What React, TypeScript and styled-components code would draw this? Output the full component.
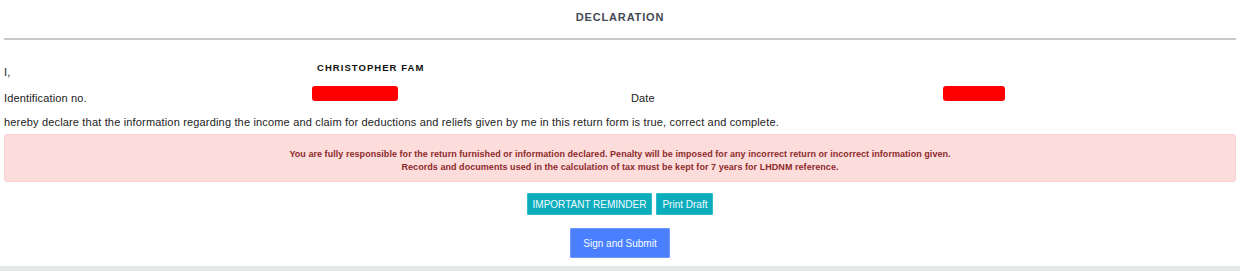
import React from 'react';
import styled, { createGlobalStyle } from 'styled-components';

const GlobalStyle = createGlobalStyle`
  html, body {
    margin: 0;
    padding: 0;
    background: #ffffff;
  }
  body {
    font-family: "Liberation Sans", Arial, sans-serif;
    color: #222;
  }
`;

const Page = styled.div`
  width: 1240px;
  height: 271px;
  display: flex;
  flex-direction: column;
  background: #fff;
  overflow: hidden;
`;

const Section = styled.div`
  flex: 1;
  padding: 0 4px;
  display: flex;
  flex-direction: column;
`;

const Title = styled.h3`
  margin: 0;
  padding-top: 11px;
  height: 38px;
  box-sizing: border-box;
  line-height: 13px;
  text-align: center;
  font-size: 11px;
  font-weight: 700;
  letter-spacing: 0.85px;
  color: #3f4a54;
`;

const Rule = styled.hr`
  margin: 0;
  border: none;
  border-top: 2px solid #c8c8c8;
`;

const InfoGrid = styled.div`
  display: grid;
  grid-template-columns: 308px 319px 312px 1fr;
  grid-template-rows: 17px 26px;
  margin-top: 22px;
  font-size: 11px;
  line-height: 13px;
  letter-spacing: 0.15px;
  color: #222;
`;

const Label = styled.div`
  align-self: end;
`;

const Name = styled.div`
  align-self: start;
  padding-left: 5px;
  font-size: 9.5px;
  line-height: 12px;
  font-weight: 700;
  letter-spacing: 1.05px;
  color: #111;
`;

const Redacted = styled.div<{ $w: number }>`
  align-self: start;
  margin-top: 7px;
  width: ${(p) => p.$w}px;
  height: 15px;
  background: #ff0000;
  border-radius: 3px;
`;

const Statement = styled.p`
  margin: 0;
  padding-top: 11px;
  font-size: 11px;
  line-height: 13px;
  letter-spacing: 0.17px;
  color: #222;
`;

const Alert = styled.div`
  margin-top: 5px;
  height: 48px;
  box-sizing: border-box;
  padding-top: 13px;
  background: #fddcdc;
  border: 1px solid #fbd0d0;
  border-radius: 3px;
  text-align: center;
  font-size: 9px;
  font-weight: 700;
  line-height: 13px;
  letter-spacing: 0.05px;
  color: #8c2b2b;
`;

const ButtonRow = styled.div<{ $top: number }>`
  display: flex;
  justify-content: center;
  gap: 4px;
  margin-top: ${(p) => p.$top}px;
`;

const Button = styled.button<{ $tone: 'info' | 'primary' }>`
  font-family: "Liberation Sans", Arial, sans-serif;
  font-size: 10px;
  color: #f4fbff;
  border: 1px solid ${(p) => (p.$tone === 'info' ? '#2cbccb' : '#6d98ff')};
  border-radius: 1px;
  background: ${(p) => (p.$tone === 'info' ? '#0badbd' : '#4a80ff')};
  padding: ${(p) => (p.$tone === 'info' ? '0 5px' : '0 12px')};
  height: ${(p) => (p.$tone === 'info' ? '22px' : '30px')};
  cursor: pointer;
`;

const Footer = styled.div`
  height: 5px;
  background: #e3e7e7;
`;

export default function App() {
  return (
    <>
      <GlobalStyle />
      <Page>
        <Section>
          <Title>DECLARATION</Title>
          <Rule />
          <InfoGrid>
            <Label>I,</Label>
            <Name>CHRISTOPHER FAM</Name>
            <div />
            <div />
            <Label>Identification no.</Label>
            <Redacted $w={86} />
            <Label>Date</Label>
            <Redacted $w={62} />
          </InfoGrid>
          <Statement>
            hereby declare that the information regarding the income and claim for deductions and reliefs given by me in this return form is true, correct and complete.
          </Statement>
          <Alert>
            You are fully responsible for the return furnished or information declared. Penalty will be imposed for any incorrect return or incorrect information given.
            <br />
            Records and documents used in the calculation of tax must be kept for 7 years for LHDNM reference.
          </Alert>
          <ButtonRow $top={11}>
            <Button $tone="info">IMPORTANT REMINDER</Button>
            <Button $tone="info">Print Draft</Button>
          </ButtonRow>
          <ButtonRow $top={13}>
            <Button $tone="primary">Sign and Submit</Button>
          </ButtonRow>
        </Section>
        <Footer />
      </Page>
    </>
  );
}
